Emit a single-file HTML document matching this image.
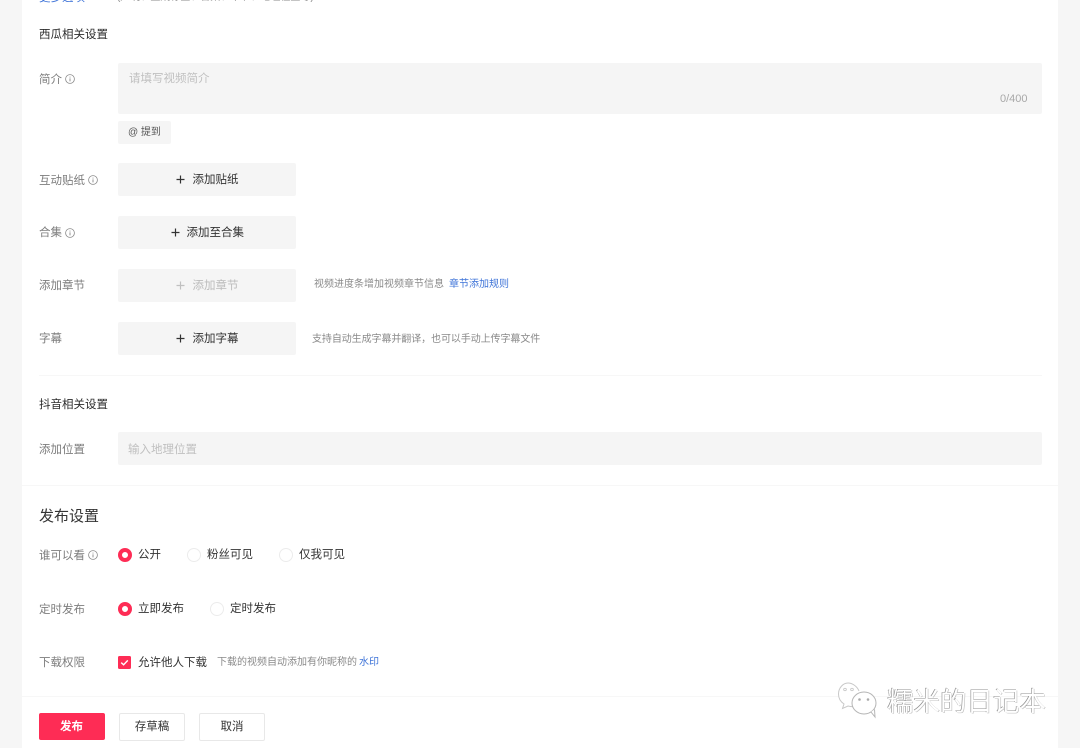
<!DOCTYPE html>
<html lang="zh"><head><meta charset="utf-8"><style>
html,body{margin:0;padding:0;width:1080px;height:748px;overflow:hidden;background:#fff}
body{position:relative;font-family:"Liberation Sans","Noto Sans CJK SC",sans-serif;font-size:11.5px;color:#333}
#w{position:absolute;left:0;top:0;width:1080px;height:748px;filter:blur(.35px)}
.a{position:absolute;white-space:nowrap;line-height:16px}
.box{position:absolute;background:#f5f5f5;border-radius:2px}
.l{color:#7d7d7d;left:39px}
.t{color:#2b2b2b}
.g{color:#8a8a8a;font-size:10px}
.b{color:#3f74d8}
.btn{position:absolute;left:118px;width:178px;height:33px;background:#f5f5f5;border-radius:2px;color:#333;line-height:35px;white-space:nowrap}
.btn span{position:absolute;top:0}
.btn svg{position:absolute;top:12px}
.i{position:absolute;width:10px;height:10px}
.r{position:absolute;width:14px;height:14px;border-radius:50%;box-sizing:border-box}
.on{border:4px solid #fe2c55;background:#fff}
.off{border:1.5px solid #ececec;background:#fff}
.hr{position:absolute;height:1px;background:#f7f7f7}
.sb{position:absolute;top:713px;height:28px;box-sizing:border-box;text-align:center;line-height:27px;border:1px solid #e8e8e8;border-radius:2px;color:#333;background:#fff}
</style></head><body><div id="w">
<div style="position:absolute;left:0;top:0;width:22px;height:748px;background:#f6f6f6"></div>
<div style="position:absolute;left:1058px;top:0;width:22px;height:748px;background:#f6f6f6"></div>
<div class="a b" style="left:39px;top:-10px;font-size:11.5px">更多选项</div>
<div class="a g" style="left:117px;top:-10px">(声明、生成标签、合集、章节、地理位置等)</div>

<div class="a t" style="left:39px;top:27px">西瓜相关设置</div>

<div class="a l" style="top:72px">简介</div>
<svg class="i" style="left:65px;top:74px" viewBox="0 0 10 10"><circle cx="5" cy="5" r="4.4" fill="none" stroke="#888" stroke-width=".8"/><path d="M5 4.4V7.4M5 2.6V3.5" stroke="#888" stroke-width=".9"/></svg>
<div class="box" style="left:118px;top:63px;width:924px;height:51px"></div>
<div class="a" style="left:129px;top:71px;color:#c0c0c0">请填写视频简介</div>
<div class="a" style="left:1000px;top:91px;color:#a8a8a8;font-size:11px">0/400</div>
<div class="box" style="left:118px;top:121px;width:53px;height:23px"></div>
<div class="a" style="left:128px;top:125px;color:#555;font-size:10px">@ 提到</div>

<div class="a l" style="top:173px">互动贴纸</div>
<svg class="i" style="left:88px;top:175px" viewBox="0 0 10 10"><circle cx="5" cy="5" r="4.4" fill="none" stroke="#888" stroke-width=".8"/><path d="M5 4.4V7.4M5 2.6V3.5" stroke="#888" stroke-width=".9"/></svg>
<div class="btn" style="top:163px"><svg style="left:58px" width="9" height="9" viewBox="0 0 9 9"><path d="M4.5 .5V8.5M.5 4.5H8.5" stroke="#333" stroke-width="1.2"/></svg><span style="left:74.500px">添加贴纸</span></div>

<div class="a l" style="top:225px">合集</div>
<svg class="i" style="left:65px;top:228px" viewBox="0 0 10 10"><circle cx="5" cy="5" r="4.4" fill="none" stroke="#888" stroke-width=".8"/><path d="M5 4.4V7.4M5 2.6V3.5" stroke="#888" stroke-width=".9"/></svg>
<div class="btn" style="top:216px"><svg style="left:53px" width="9" height="9" viewBox="0 0 9 9"><path d="M4.5 .5V8.5M.5 4.5H8.5" stroke="#333" stroke-width="1.2"/></svg><span style="left:68.500px">添加至合集</span></div>

<div class="a l" style="top:278px">添加章节</div>
<div class="btn" style="top:269px;color:#bcbcbc"><svg style="left:58px" width="9" height="9" viewBox="0 0 9 9"><path d="M4.5 .5V8.5M.5 4.5H8.5" stroke="#c0c0c0" stroke-width="1.2"/></svg><span style="left:74.500px">添加章节</span></div>
<div class="a g" style="left:314px;top:277px">视频进度条增加视频章节信息</div>
<div class="a b" style="left:449px;top:277px;font-size:10px">章节添加规则</div>

<div class="a l" style="top:331px">字幕</div>
<div class="btn" style="top:322px"><svg style="left:58px" width="9" height="9" viewBox="0 0 9 9"><path d="M4.5 .5V8.5M.5 4.5H8.5" stroke="#333" stroke-width="1.2"/></svg><span style="left:74.500px">添加字幕</span></div>
<div class="a g" style="left:312px;top:332px;letter-spacing:-.08px">支持自动生成字幕并翻译，也可以手动上传字幕文件</div>

<div class="hr" style="left:39px;top:375px;width:1003px"></div>
<div class="a t" style="left:39px;top:397px">抖音相关设置</div>

<div class="a l" style="top:442px">添加位置</div>
<div class="box" style="left:118px;top:432px;width:924px;height:33px"></div>
<div class="a" style="left:128px;top:442px;color:#c0c0c0">输入地理位置</div>

<div class="hr" style="left:22px;top:485px;width:1036px"></div>
<div class="a" style="left:39px;top:508px;font-size:15px;line-height:18px;color:#333">发布设置</div>

<div class="a l" style="top:548px">谁可以看</div>
<svg class="i" style="left:88px;top:550px" viewBox="0 0 10 10"><circle cx="5" cy="5" r="4.4" fill="none" stroke="#888" stroke-width=".8"/><path d="M5 4.4V7.4M5 2.6V3.5" stroke="#888" stroke-width=".9"/></svg>
<div class="r on" style="left:118px;top:548px"></div>
<div class="a" style="left:138px;top:547px">公开</div>
<div class="r off" style="left:187px;top:548px"></div>
<div class="a" style="left:207px;top:547px">粉丝可见</div>
<div class="r off" style="left:279px;top:548px"></div>
<div class="a" style="left:299px;top:547px">仅我可见</div>

<div class="a l" style="top:602px">定时发布</div>
<div class="r on" style="left:118px;top:602px"></div>
<div class="a" style="left:138px;top:601px">立即发布</div>
<div class="r off" style="left:210px;top:602px"></div>
<div class="a" style="left:230px;top:601px">定时发布</div>

<div class="a l" style="top:655px">下载权限</div>
<svg style="position:absolute;left:118px;top:656px" width="13" height="13" viewBox="0 0 13 13"><rect width="13" height="13" rx="1.5" fill="#fe2c55"/><path d="M3.2 6.6L5.6 8.8L9.8 4.4" fill="none" stroke="#fff" stroke-width="1.4"/></svg>
<div class="a" style="left:138px;top:655px">允许他人下载</div>
<div class="a g" style="left:217px;top:655px">下载的视频自动添加有你昵称的</div>
<div class="a b" style="left:359px;top:655px;font-size:10px">水印</div>

<div class="hr" style="left:22px;top:696px;width:1036px"></div>
<div class="a" style="left:39px;top:713px;width:65px;height:27px;padding-right:1px;background:#fe2c55;border-radius:2px;color:#fff;font-weight:bold;text-align:center;line-height:28px">发布</div>
<div class="sb" style="left:119px;width:66px">存草稿</div>
<div class="sb" style="left:199px;width:66px">取消</div>

<svg style="position:absolute;left:837px;top:680px" width="48" height="40" viewBox="0 0 48 40"><path d="M22 11C20 6 15 3 11 3C6 3 1.500 8 1.500 14C1.500 19 4 22 7 24L5.500 28.500L11 26C13 26.500 15 27 17 26.500" fill="#fff" stroke="#c8c8c8" stroke-width="1"/><ellipse cx="27" cy="23" rx="12" ry="11" fill="#fff" stroke="#b5b5b5" stroke-width="1"/><path d="M34 32L38 37L37.500 29.500" fill="#fff" stroke="#b5b5b5" stroke-width="1"/><circle cx="8" cy="9.500" r="1.300" fill="none" stroke="#bbb" stroke-width=".7"/><circle cx="15" cy="9.500" r="1.300" fill="none" stroke="#bbb" stroke-width=".7"/><circle cx="22.500" cy="19.500" r="1.300" fill="#aaa"/><circle cx="31" cy="19.500" r="1.300" fill="#aaa"/></svg>
<div class="a" style="left:887px;top:687px;font-size:26.500px;line-height:30px;color:#fff;text-shadow:-.6px -.6px 0 #8f8f8f,.6px .6px 0 #c0c0c0">糯米的日记本</div>
</div></body></html>
